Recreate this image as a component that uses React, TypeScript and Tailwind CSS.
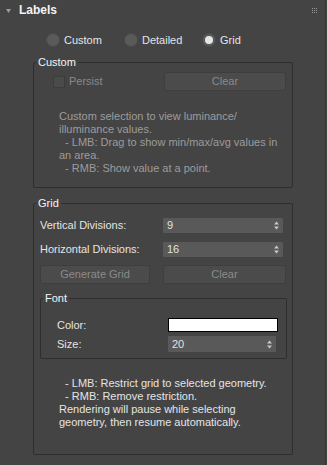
import React from "react";

function SpinArrows() {
  return (
    <svg width="5" height="9" viewBox="0 0 5 9" className="shrink-0">
      <path d="M2.5 0.5 L5 3.5 L0 3.5 Z" fill="#c8c8c8" />
      <path d="M2.5 8.5 L5 5.5 L0 5.5 Z" fill="#c8c8c8" />
    </svg>
  );
}

function Spinner({ value, className }: { value: string; className: string }) {
  return (
    <div className={"flex items-center justify-between bg-[#595959] rounded-[1px] pl-[4px] pr-[4px] text-[#e2e2e2] " + className}>
      <span className="leading-none">{value}</span>
      <SpinArrows />
    </div>
  );
}

function Btn({ label, className }: { label: string; className: string }) {
  return (
    <div className={"flex items-center justify-center h-[19px] rounded-[2px] bg-[#4b4b4b] border border-[#3e3e3e] text-[#8a8a8a] " + className}>
      {label}
    </div>
  );
}

function Radio({ label, checked }: { label: string; checked?: boolean }) {
  return (
    <div className="flex items-center gap-[4px]">
      <div className="w-[14px] h-[14px] rounded-full bg-[#5a5a5a] border border-[#4a4a4a] flex items-center justify-center">
        {checked && <div className="w-[8px] h-[8px] rounded-full bg-[#e6e6e6]" />}
      </div>
      <span className="text-[#e4e4e4] leading-[14px]">{label}</span>
    </div>
  );
}

export default function App() {
  return (
    <div className="w-[327px] h-[465px] bg-[#444444] flex font-['Liberation_Sans',Arial,sans-serif] text-[11px] overflow-hidden">
      <div className="w-[325px] flex flex-col">
        {/* header */}
        <div className="h-[20px] flex items-center pl-[6px] pr-[8px]">
          <svg width="5" height="4" viewBox="0 0 5 4" className="mt-[1px]">
            <path d="M0 0 L5 0 L2.5 4 Z" fill="#9c9c9c" />
          </svg>
          <span className="ml-[8px] text-[12px] font-bold text-[#f2f2f2] leading-none">Labels</span>
          <div className="ml-auto grid grid-cols-3 gap-[1px]">
            {Array.from({ length: 9 }).map((_, i) => (
              <div key={i} className="w-[1px] h-[1px] bg-[#9a9a9a]" />
            ))}
          </div>
        </div>

        {/* radios */}
        <div className="mt-[13px] h-[14px] grid grid-cols-[78px_78px_78px] items-center pl-[46px]">
          <Radio label="Custom" />
          <Radio label="Detailed" />
          <Radio label="Grid" checked />
        </div>

        {/* Custom group */}
        <fieldset className="mt-[9px] ml-[33px] w-[260px] h-[132px] border border-[#2e2e2e] rounded-[2px] px-0 pb-[11px]">
          <legend className="ml-[2px] px-[2px] text-[#f4f4f4] leading-[13px]">Custom</legend>
          <div className="mt-[3px] flex items-center h-[19px]">
            <div className="ml-[19px] w-[12px] h-[12px] bg-[#4b4b4b] border border-[#3c3c3c]" />
            <span className="ml-[4px] text-[#8a8a8a]">Persist</span>
            <Btn label="Clear" className="ml-auto mr-[6px] w-[122px]" />
          </div>
          <div className="mt-[19px] pl-[25px] text-[#9c9c9c] leading-[13px] whitespace-pre">
            <div>Custom selection to view luminance/</div>
            <div>illuminance values.</div>
            <div>{"  - LMB: Drag to show min/max/avg values in"}</div>
            <div>an area.</div>
            <div>{"  - RMB: Show value at a point."}</div>
          </div>
        </fieldset>

        {/* Grid group */}
        <fieldset className="mt-[9px] ml-[33px] w-[260px] h-[258px] border border-[#2e2e2e] rounded-[2px] px-0">
          <legend className="ml-[2px] px-[2px] text-[#f4f4f4] leading-[13px]">Grid</legend>
          <div className="mt-[7px] grid grid-cols-[123px_120px] pl-[6px] items-center h-[15px]">
            <span className="text-[#e4e4e4]">Vertical Divisions:</span>
            <Spinner value="9" className="h-[15px]" />
          </div>
          <div className="mt-[9px] grid grid-cols-[123px_120px] pl-[6px] items-center h-[15px]">
            <span className="text-[#e4e4e4]">Horizontal Divisions:</span>
            <Spinner value="16" className="h-[15px]" />
          </div>
          <div className="mt-[9px] flex pl-[6px] gap-[13px]">
            <Btn label="Generate Grid" className="w-[110px]" />
            <Btn label="Clear" className="w-[123px]" />
          </div>

          {/* Font group */}
          <fieldset className="mt-[8px] ml-[6px] w-[247px] h-[67px] border border-[#2e2e2e] rounded-[2px] px-0">
            <legend className="ml-[2px] px-[2px] text-[#f4f4f4] leading-[13px]">Font</legend>
            <div className="mt-[13px] flex items-center h-[14px] pl-[16px]">
              <span className="w-[111px] text-[#e4e4e4]">Color:</span>
              <div className="w-[110px] h-[14px] bg-white border border-black" />
            </div>
            <div className="mt-[4px] flex items-center h-[16px] pl-[16px]">
              <span className="w-[111px] text-[#e4e4e4]">Size:</span>
              <Spinner value="20" className="w-[108px] h-[16px]" />
            </div>
          </fieldset>

          <div className="mt-[18px] pl-[25px] text-[#e4e4e4] leading-[13px] whitespace-pre">
            <div>{"  - LMB: Restrict grid to selected geometry."}</div>
            <div>{"  - RMB: Remove restriction."}</div>
            <div>Rendering will pause while selecting</div>
            <div>geometry, then resume automatically.</div>
          </div>
        </fieldset>
      </div>
      <div className="w-[1px] bg-[#383838]" />
      <div className="w-[1px]" />
    </div>
  );
}
